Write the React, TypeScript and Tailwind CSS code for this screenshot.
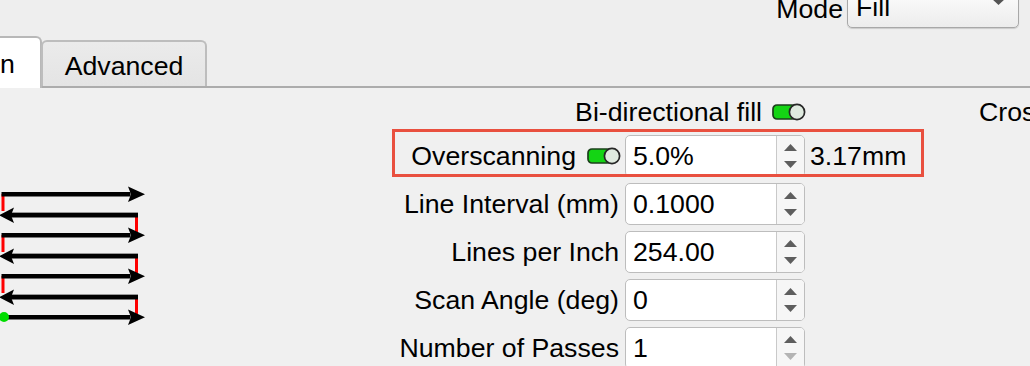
import React from "react";

function Toggle() {
  return (
    <svg width="34" height="18" viewBox="0 0 34 18" className="shrink-0">
      <rect x="1" y="2" width="23" height="14" rx="4" fill="#14d414" stroke="#1b3f1b" strokeWidth="1.7" />
      <circle cx="25" cy="9" r="7.6" fill="#dfeadf" stroke="#262626" strokeWidth="1.7" />
    </svg>
  );
}

function Spin({ value, downDisabled }: { value: string; downDisabled?: boolean }) {
  return (
    <div className="w-[180px] h-[42px] shrink-0 bg-white border border-[#bdbdbd] rounded-[5px] flex overflow-hidden">
      <div className="flex-1 pl-[7px] flex items-center leading-none">{value}</div>
      <div className="w-[28px] border-l border-[#c9c9c9] bg-[#f6f6f6] flex flex-col items-center justify-center gap-[10px]">
        <svg width="13" height="7" viewBox="0 0 13 7">
          <polygon points="0,7 13,7 6.5,0" fill="#5e5e5e" />
        </svg>
        <svg width="13" height="7" viewBox="0 0 13 7">
          <polygon points="0,0 13,0 6.5,7" fill={downDisabled ? "#b4b4b4" : "#5e5e5e"} />
        </svg>
      </div>
    </div>
  );
}

function Row({ label, value, downDisabled }: { label: string; value: string; downDisabled?: boolean }) {
  return (
    <div className="flex items-center mt-[6px]">
      <div className="w-[233px] pr-[6px] text-right whitespace-nowrap leading-none">{label}</div>
      <Spin value={value} downDisabled={downDisabled} />
    </div>
  );
}

function Diagram() {
  const ys = [194, 215, 235, 256, 276, 297, 317];
  return (
    <svg width="150" height="150" viewBox="0 180 150 150">
      <rect x="1.5" y={194} width="3" height="17" fill="#ff0000" />
      <rect x="135" y={215} width="3" height="17" fill="#ff0000" />
      <rect x="1.5" y={235} width="3" height="17" fill="#ff0000" />
      <rect x="135" y={256} width="3" height="17" fill="#ff0000" />
      <rect x="1.5" y={276} width="3" height="17" fill="#ff0000" />
      <rect x="135" y={297} width="3" height="17" fill="#ff0000" />
      {ys.map((y, i) =>
        i % 2 === 0 ? (
          <g key={i}>
            <rect x="1.5" y={y - 2} width="129" height="4.5" fill="#000" />
            <polygon points={`128,${y - 7.5} 145,${y + 0.2} 128,${y + 8} 131,${y + 0.2}`} fill="#000" />
          </g>
        ) : (
          <g key={i}>
            <rect x="8" y={y - 2} width="130" height="4.5" fill="#000" />
            <rect x="8" y={y - 3} width="130" height="1" fill="#9a9a9a" />
            <polygon points={`-1,${y + 0.2} 14,${y - 7.5} 11,${y + 0.2} 14,${y + 8}`} fill="#000" />
          </g>
        )
      )}
      <circle cx="4" cy="317" r="5" fill="#00dd00" />
    </svg>
  );
}

export default function App() {
  return (
    <div className="w-[1030px] h-[366px] overflow-hidden bg-[#eeeeee] text-[26.7px] text-black font-['Liberation_Sans',Arial,sans-serif] flex flex-col">
      {/* top: mode */}
      <div className="h-[36px] shrink-0 flex justify-end items-start pr-[11px]">
        <div className="mt-[-6px] leading-[30px]">Mode</div>
        <div className="ml-[4px] mt-[-14px] w-[172px] h-[42px] rounded-[5px] border border-[#a8a8a8] bg-gradient-to-b from-[#ffffff] to-[#ececec] shadow-[0_1px_1px_rgba(0,0,0,0.15)] flex items-center justify-between pl-[8px] pr-[12px]">
          <span className="mt-[1px] leading-none">Fill</span>
          <svg width="15" height="7" viewBox="0 0 15 7" className="mt-[-11px]">
            <polygon points="0,0 15,0 7.5,7" fill="#555" />
          </svg>
        </div>
      </div>
      {/* tabs */}
      <div className="h-[52px] shrink-0 flex items-end border-b-2 border-[#acacac]">
        <div className="h-[52px] w-[42px] mb-[-2px] bg-white border-t-2 border-r-2 border-[#b8b8b8] rounded-tr-[6px] flex items-center leading-none pt-[2px]">
          n
        </div>
        <div className="h-[46px] w-[166px] ml-[-1px] bg-gradient-to-b from-[#ebebeb] to-[#e4e4e4] border-2 border-b-0 border-[#bdbdbd] rounded-t-[6px] flex items-center justify-center leading-none pt-[4px]">
          Advanced
        </div>
      </div>
      {/* pane */}
      <div className="flex-1 flex bg-[#f0f0f0]">
        <div className="w-[150px] shrink-0 pt-[92px]">
          <Diagram />
        </div>
        <div className="ml-[242px] pt-[10px] flex flex-col">
          <div className="flex items-center h-[28px]">
            <div className="w-[414px] flex justify-end items-center gap-[10px] whitespace-nowrap leading-none">
              <span>Bi-directional fill</span>
              <Toggle />
            </div>
            <div className="ml-[173px] leading-none whitespace-nowrap">Cross-hatch</div>
          </div>
          <div className="relative flex items-center mt-[9px]">
            <div className="w-[233px] pr-[4px] flex justify-end items-center gap-[11px] whitespace-nowrap leading-none">
              <span>Overscanning</span>
              <Toggle />
            </div>
            <Spin value="5.0%" />
            <div className="ml-[5px] leading-none">3.17mm</div>
            <div className="absolute left-0 top-[-6px] w-[532px] h-[48px] border-[3px] border-[#e9503f] pointer-events-none" />
          </div>
          <Row label="Line Interval (mm)" value="0.1000" />
          <Row label="Lines per Inch" value="254.00" />
          <Row label="Scan Angle (deg)" value="0" />
          <Row label="Number of Passes" value="1" downDisabled />
        </div>
      </div>
    </div>
  );
}
